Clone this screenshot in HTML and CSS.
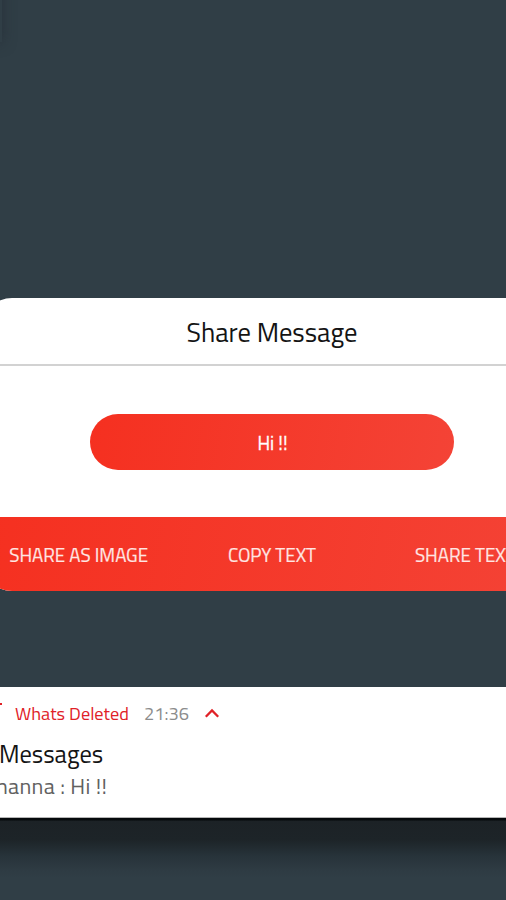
FILE: index.html
```
<!DOCTYPE html>
<html lang="en">
<head>
    <meta charset="UTF-8">
    <meta name="viewport" content="width=device-width, initial-scale=1.0">
    <title>Share Message</title>
    <link rel="stylesheet" href="styles.css">
</head>
<body>

<div class="screen">
    <div class="edge-shadow"></div>

    <div class="dialog">
        <h1 class="dialog-title"><span>Share Message</span></h1>
        <div class="dialog-body">
            <div class="bubble"><span>Hi !!</span></div>
        </div>
        <div class="dialog-actions">
            <span class="action share-image">SHARE AS IMAGE</span>
            <span class="action copy-text">COPY TEXT</span>
            <span class="action share-text">SHARE TEXT</span>
        </div>
    </div>

    <div class="notification">
        <div class="notification-header">
            <span class="app-icon"></span>
            <span class="app-name">Whats Deleted</span>
            <span class="time">21:36</span>
            <svg class="chevron" width="16" height="10" viewBox="0 0 16 10">
                <path d="M1.8 8.7 L8 2.5 L14.2 8.7" fill="none" stroke="#e02127" stroke-width="2.3"/>
            </svg>
        </div>
        <p class="notification-title">Messages</p>
        <p class="notification-text">hanna : Hi !!</p>
    </div>
    <div class="notification-shadow"></div>
</div>

</body>
</html>
```

FILE: styles.css
```
body {
    margin: 0;
    background-color: #303e46;
    font-family: 'Titillium Web', 'Open Sans', sans-serif;
}
.screen {
    position: relative;
    height: 900px;
    overflow: hidden;
    box-sizing: border-box;
    padding-top: 298px;
}
.edge-shadow {
    position: absolute;
    left: -20px;
    top: -20px;
    width: 22px;
    height: 62px;
    box-shadow: 0 0 14px rgba(34, 40, 50, 0.6);
}
.dialog {
    width: 580px;
    height: 293px;
    margin-left: -18px;
    display: flex;
    flex-direction: column;
    background-color: #ffffff;
    border-radius: 30px;
    overflow: hidden;
}
.dialog-title {
    box-sizing: border-box;
    height: 68px;
    margin: 0;
    border-bottom: 2px solid #d2d2d2;
    text-align: center;
    font-size: 26.6px;
    font-weight: 400;
    line-height: 68px;
    color: #141414;
}
.dialog-body {
    flex: 1;
    display: flex;
    align-items: center;
    justify-content: center;
}
.bubble {
    box-sizing: border-box;
    width: 364px;
    height: 56px;
    margin-right: 1px;
    padding-left: 2px;
    border-radius: 28px;
    background: linear-gradient(100deg, #f53020, #f44336);
    color: #ffffff;
    font-size: 18.8px;
    line-height: 59px;
    text-align: center;
    -webkit-text-stroke: 0.3px #ffffff;
}
.dialog-actions {
    height: 74px;
    display: grid;
    grid-template-columns: repeat(3, 1fr);
    background: linear-gradient(100deg, #f53020, #f44336);
    color: #ffe6e3;
    font-size: 18.8px;
    line-height: 76px;
    text-align: center;
    white-space: nowrap;
    -webkit-text-stroke: 0.2px #ffe6e3;
}
.notification {
    box-sizing: border-box;
    height: 131px;
    margin-top: 96px;
    padding-top: 13px;
    background-color: #ffffff;
    border-bottom: 1px solid #b5b5b5;
}
.notification-shadow {
    height: 60px;
    background: linear-gradient(#05090b 2px, #1c2226 3px, #1d2428 22px, #27333a 38px, #2e3b43 52px, #303e46);
}
.notification-header {
    display: flex;
    align-items: center;
    height: 26px;
    font-size: 18.3px;
}
.app-icon {
    width: 2px;
    height: 2px;
    margin: -18px 13px 0 0;
    background-color: #e02127;
}
.app-name {
    width: 129px;
    color: #e02127;
}
.time {
    width: 60px;
    color: #8c8c8c;
}
.notification-title,
.notification-text {
    margin: 0;
    white-space: nowrap;
}
.notification-title {
    font-size: 24.5px;
    line-height: 34px;
    margin: 11px 0 0 -1px;
    color: #141414;
}
.notification-text {
    font-size: 22px;
    line-height: 30px;
    margin-left: -4px;
    letter-spacing: 0.3px;
    color: #606060;
}
```
